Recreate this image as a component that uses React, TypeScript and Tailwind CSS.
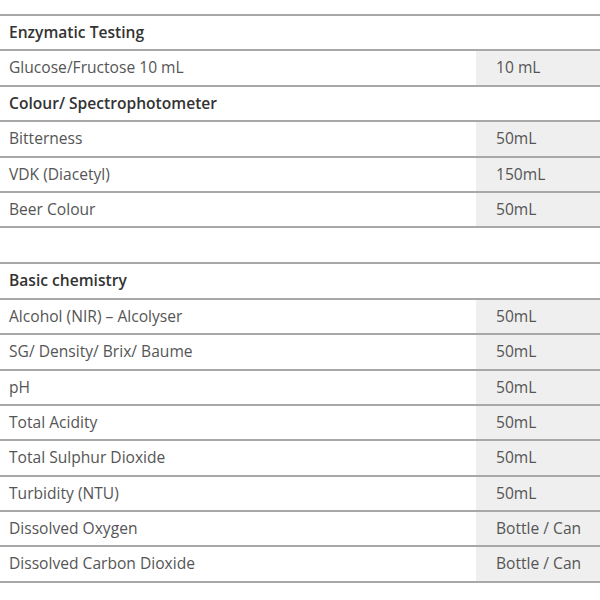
type Row = { label: string; value?: string; heading?: boolean };

const tableOne: Row[] = [
  { label: "Enzymatic Testing", heading: true },
  { label: "Glucose/Fructose 10 mL", value: "10 mL" },
  { label: "Colour/ Spectrophotometer", heading: true },
  { label: "Bitterness", value: "50mL" },
  { label: "VDK (Diacetyl)", value: "150mL" },
  { label: "Beer Colour", value: "50mL" },
];

const tableTwo: Row[] = [
  { label: "Basic chemistry", heading: true },
  { label: "Alcohol (NIR) – Alcolyser", value: "50mL" },
  { label: "SG/ Density/ Brix/ Baume", value: "50mL" },
  { label: "pH", value: "50mL" },
  { label: "Total Acidity", value: "50mL" },
  { label: "Total Sulphur Dioxide", value: "50mL" },
  { label: "Turbidity (NTU)", value: "50mL" },
  { label: "Dissolved Oxygen", value: "Bottle / Can" },
  { label: "Dissolved Carbon Dioxide", value: "Bottle / Can" },
];

function TestTable({ rows }: { rows: Row[] }) {
  return (
    <div className="border-b-2 border-[#a8a8a8]">
      {rows.map((row) => (
        <div
          key={row.label}
          className="grid h-[35.4px] grid-cols-[476px_1fr] border-t-2 border-[#a8a8a8]"
        >
          {row.heading ? (
            <div className="col-span-2 flex items-center pl-[9px] font-semibold text-[#333]">
              {row.label}
            </div>
          ) : (
            <>
              <div className="flex items-center pl-[9px] text-[#555]">
                {row.label}
              </div>
              <div className="flex items-center bg-[#efefef] pl-[20px] text-[#555]">
                {row.value}
              </div>
            </>
          )}
        </div>
      ))}
    </div>
  );
}

export default function App() {
  return (
    <div className="h-[600px] w-[600px] bg-white pt-[14px] font-['Open_Sans',sans-serif] text-[15.6px]">
      <TestTable rows={tableOne} />
      <div className="h-[34px]" />
      <TestTable rows={tableTwo} />
    </div>
  );
}
